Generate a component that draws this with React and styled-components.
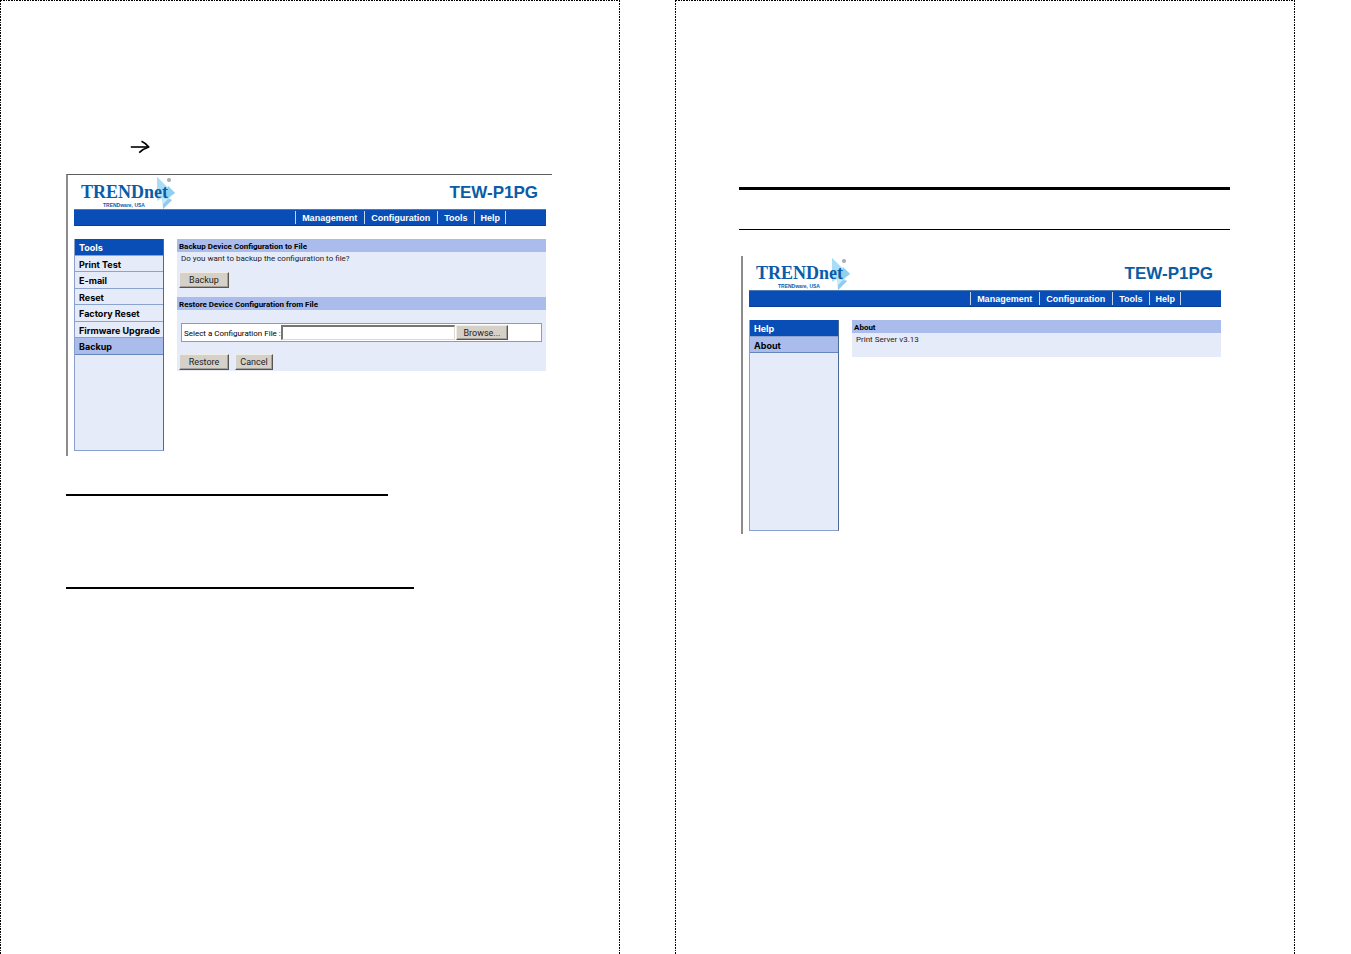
import React from "react";
import styled, { createGlobalStyle } from "styled-components";

const GlobalStyle = createGlobalStyle`
  *, *::before, *::after { box-sizing: border-box; }
  body {
    margin: 0;
    background: #fff;
    color: #000;
    font-family: "Liberation Sans", Arial, sans-serif;
  }
`;

const dashStops = `#000 0 2px, transparent 2px 3px, #000 3px 5px, transparent 5px 6px, #000 6px 7px, transparent 7px 8px`;
const formFont = `Roboto, "Liberation Sans", Arial, sans-serif`;

const Spread = styled.div`
  display: grid;
  grid-template-columns: 1fr 1fr;
  column-gap: 55px;
  padding-right: 56px;
  min-height: 100vh;
`;

const Sheet = styled.section`
  display: flex;
  flex-direction: column;
  padding: ${(p) => p.$padding};
  background-image:
    repeating-linear-gradient(to right, ${dashStops}),
    repeating-linear-gradient(to bottom, ${dashStops}),
    repeating-linear-gradient(to bottom, ${dashStops});
  background-size: 100% 1px, 1px 100%, 1px 100%;
  background-position: top left, top left, top right;
  background-repeat: no-repeat;
`;

const Arrow = styled.svg`
  display: block;
  width: 20px;
  height: 14px;
  margin: 0 0 20px 64px;
`;

const Rule = styled.hr`
  width: ${(p) => p.$width};
  max-width: 100%;
  height: ${(p) => p.$weight}px;
  margin: ${(p) => p.$gap}px 0 0;
  border: 0;
  background: #000;
`;

const Window = styled.div`
  margin: ${(p) => p.$margin};
  padding: 0 6px ${(p) => (p.$topEdge ? 5 : 3)}px;
  border-left: 2px solid #8c8c8c;
  border-top: ${(p) => (p.$topEdge ? "1px solid #5c5c5c" : "0")};
`;

const Header = styled.header`
  display: flex;
  justify-content: space-between;
  align-items: flex-start;
  height: 34px;
  padding: 0 8px 0 7px;
`;

const Brand = styled.div`
  position: relative;
  width: 96px;
  height: 34px;
  padding-top: 7px;
  color: #0a5ca8;
`;

const Crystal = styled.svg`
  position: absolute;
  top: 1px;
  left: 76px;
  width: 20px;
  height: 33px;
`;

const BrandName = styled.div`
  position: relative;
  font: bold 18px/20px "Liberation Serif", "Times New Roman", serif;
  white-space: nowrap;
`;

const BrandNote = styled.div`
  position: relative;
  padding-left: 22px;
  font-size: 5px;
  font-weight: bold;
  line-height: 7px;
  white-space: nowrap;
`;

const Model = styled.h1`
  margin: 0;
  padding-top: 8px;
  color: #0a5ca5;
  font-size: 17px;
  line-height: 20px;
`;

const NavBar = styled.nav`
  display: flex;
  justify-content: flex-end;
  height: 17px;
  padding: 1px 40px 1px 0;
  border-top: 1px solid #4d7cb4;
  border-bottom: 1px solid #0a3f96;
  background: #084eb6;
`;

const NavLink = styled.a`
  padding: 0 7px 0 6px;
  border-left: 1px solid #c4d3ea;
  color: #fff;
  font-size: 9px;
  font-weight: bold;
  line-height: 14px;
  text-decoration: none;

  &:last-child {
    padding: 0 5px;
    border-right: 1px solid #c4d3ea;
  }
`;

const Columns = styled.div`
  display: flex;
  align-items: flex-start;
  gap: 13px;
  margin-top: 13px;
`;

const Sidebar = styled.aside`
  flex: 0 0 90px;
  min-height: ${(p) => p.$height}px;
  border: 1px solid #8aa0ca;
  border-right-color: #4c6a96;
  border-top: 0;
  background: #e5ebf9;
`;

const sideRow = `
  display: block;
  height: 17px;
  padding-left: 4px;
  border-bottom: 1px solid #8aa3cf;
  font: bold 9px/18px Inter, "Liberation Sans", Arial, sans-serif;
  white-space: nowrap;
  &:nth-child(even) { height: 16px; }
`;

const SideTitle = styled.h2`
  ${sideRow}
  margin: 0;
  background: #084eb6;
  color: #fff;
`;

const SideLink = styled.a`
  ${sideRow}
  background: ${(p) => (p.$current ? "#a9bcec" : "transparent")};
  border-color: ${(p) => (p.$current ? "#6485bd" : "#8aa3cf")};
  color: #000;
  text-decoration: none;
`;

const Panel = styled.main`
  flex: 1;
  min-width: 0;
  background: #e5ebf9;
`;

const PanelTitle = styled.h3`
  height: 13px;
  margin: 0;
  padding-left: 2px;
  background: #a9bcec;
  font: bold 8px/15px ${formFont};
`;

const PanelText = styled.p`
  margin: 0;
  padding: 0 4px;
  color: #222;
  font: 8px/13px ${formFont};
`;

const AboutText = styled(PanelText)`
  padding-bottom: 11px;
`;

const ButtonRow = styled.div`
  display: flex;
  gap: 6px;
  padding: ${(p) => p.$padding};
`;

const Button = styled.button`
  width: ${(p) => p.$width}px;
  height: ${(p) => p.$height || 16}px;
  padding: 0;
  border: 1px solid;
  border-color: #efede6 #57554f #57554f #efede6;
  box-shadow: inset -1px -1px #a5a198;
  background: #d5d1c8;
  color: #222;
  font: 9px/12px ${formFont};
`;

const FileRow = styled.div`
  display: flex;
  align-items: center;
  height: 19px;
  margin: 13px 4px 0;
  padding-left: 2px;
  border: 1px solid #9a9a9e;
  background: #fff;
`;

const FileLabel = styled.label`
  flex: 0 0 97px;
  padding-top: 3px;
  font: 8px/10px ${formFont};
  white-space: nowrap;
`;

const FileInput = styled.input`
  flex: 0 1 174px;
  min-width: 0;
  height: 15px;
  margin-right: 1px;
  padding: 0 2px;
  border: solid;
  border-width: 2px 1px 1px 2px;
  border-color: #77756f #dcd9d0 #dcd9d0 #77756f;
  background: #fff;
  font: 9px/10px ${formFont};
`;

function Logo() {
  return (
    <Brand>
      <Crystal viewBox="0 0 20 33" aria-hidden="true">
        <polygon points="0,1 11,12 11,10 18,17 12,22 15,24 6,33 5,22 0,25" fill="#b5e2f7" />
        <polygon points="0,1 11,12 0,19" fill="#a9dcf6" />
        <polygon points="11,10 18,17 8,24" fill="#92cfef" />
        <polygon points="6,22 15,24 6,33" fill="#c9ebfa" />
        <polygon points="6,28 11,23 15,24 6,33" fill="#8ecdf0" />
        <circle cx="12" cy="4" r="2" fill="#a3a5aa" />
        <circle cx="12" cy="4" r="0.6" fill="#d5d5d5" />
      </Crystal>
      <BrandName>TRENDnet</BrandName>
      <BrandNote>TRENDware, USA</BrandNote>
    </Brand>
  );
}

function AdminWindow({ title, links, current, sideHeight, topEdge, margin, children }) {
  return (
    <Window $topEdge={topEdge} $margin={margin}>
      <Header>
        <Logo />
        <Model>TEW-P1PG</Model>
      </Header>
      <NavBar>
        {["Management", "Configuration", "Tools", "Help"].map((name) => (
          <NavLink href="#" key={name}>{name}</NavLink>
        ))}
      </NavBar>
      <Columns>
        <Sidebar $height={sideHeight}>
          <SideTitle>{title}</SideTitle>
          {links.map((name) => (
            <SideLink href="#" key={name} $current={name === current}>{name}</SideLink>
          ))}
        </Sidebar>
        <Panel>{children}</Panel>
      </Columns>
    </Window>
  );
}

export default function App() {
  return (
    <>
      <GlobalStyle />
      <Spread>
        <Sheet $padding="140px 68px 0 66px">
          <Arrow viewBox="0 0 20 14" fill="none" stroke="#000" aria-hidden="true">
            <path d="M0.8 7H18" strokeWidth="1.6" />
            <path d="M11.5 1.2Q15.5 3 18.8 6.9Q13.5 8.5 9.2 12.6" strokeWidth="1.6" strokeLinejoin="round" />
          </Arrow>
          <AdminWindow
            topEdge
            title="Tools"
            links={["Print Test", "E-mail", "Reset", "Factory Reset", "Firmware Upgrade", "Backup"]}
            current="Backup"
            sideHeight={212}
          >
            <PanelTitle>Backup Device Configuration to File</PanelTitle>
            <PanelText>Do you want to backup the configuration to file?</PanelText>
            <ButtonRow $padding="7px 2px 9px">
              <Button type="button" $width={50}>Backup</Button>
            </ButtonRow>
            <PanelTitle>Restore Device Configuration from File</PanelTitle>
            <FileRow>
              <FileLabel htmlFor="config-file">Select a Configuration File :</FileLabel>
              <FileInput id="config-file" type="text" />
              <Button type="button" $width={52} $height={15}>Browse...</Button>
            </FileRow>
            <ButtonRow $padding="12px 2px 1px">
              <Button type="button" $width={50}>Restore</Button>
              <Button type="button" $width={38}>Cancel</Button>
            </ButtonRow>
          </AdminWindow>
          <Rule $width="322px" $weight={2} $gap={38} />
          <Rule $width="348px" $weight={2} $gap={91} />
        </Sheet>
        <Sheet $padding="187px 65px 0 64px">
          <Rule $width="100%" $weight={3} $gap={0} />
          <Rule $width="100%" $weight={1} $gap={39} />
          <AdminWindow title="Help" links={["About"]} current="About" sideHeight={211} margin="26px 3px 0 2px">
            <PanelTitle>About</PanelTitle>
            <AboutText>Print Server v3.13</AboutText>
          </AdminWindow>
        </Sheet>
      </Spread>
    </>
  );
}
